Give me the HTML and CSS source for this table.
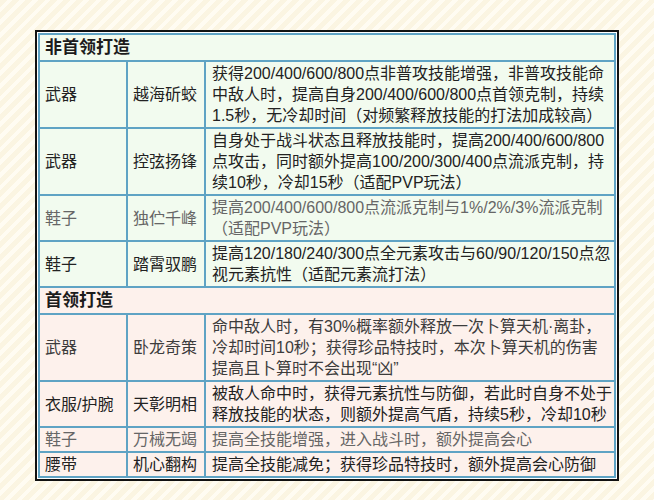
FILE: index.html
```html
<!DOCTYPE html>
<html lang="zh">
<head>
<meta charset="utf-8">
<link rel="stylesheet" href="styles.css">
</head>
<body>
<div class="frame">
<table class="gear">
  <colgroup><col class="c1"><col class="c2"><col class="c3"></colgroup>
  <tbody class="green">
    <tr><th colspan="3" class="head">非首领打造</th></tr>
    <tr><td>武器</td><td>越海斫蛟</td><td class="desc">获得200/400/600/800点非普攻技能增强，非普攻技能命中敌人时，提高自身200/400/600/800点首领克制，持续1.5秒，无冷却时间（对频繁释放技能的打法加成较高）</td></tr>
    <tr><td>武器</td><td>控弦扬锋</td><td class="desc">自身处于战斗状态且释放技能时，提高200/400/600/800点攻击，同时额外提高100/200/300/400点流派克制，持续10秒，冷却15秒（适配PVP玩法）</td></tr>
    <tr class="gray"><td>鞋子</td><td>独伫千峰</td><td class="desc">提高200/400/600/800点流派克制与1%/2%/3%流派克制（适配PVP玩法）</td></tr>
    <tr><td>鞋子</td><td>踏霄驭鹏</td><td class="desc">提高120/180/240/300点全元素攻击与60/90/120/150点忽视元素抗性（适配元素流打法）</td></tr>
  </tbody>
  <tbody class="pink">
    <tr><th colspan="3" class="head">首领打造</th></tr>
    <tr class="mid"><td>武器</td><td>卧龙奇策</td><td class="desc">命中敌人时，有30%概率额外释放一次卜算天机·离卦，冷却时间10秒；获得珍品特技时，本次卜算天机的伤害提高且卜算时不会出现“凶”</td></tr>
    <tr><td>衣服/护腕</td><td>天彰明相</td><td class="desc">被敌人命中时，获得元素抗性与防御，若此时自身不处于释放技能的状态，则额外提高气盾，持续5秒，冷却10秒</td></tr>
    <tr class="gray"><td>鞋子</td><td>万械无竭</td><td class="desc">提高全技能增强，进入战斗时，额外提高会心</td></tr>
    <tr><td>腰带</td><td>机心翻构</td><td class="desc">提高全技能减免；获得珍品特技时，额外提高会心防御</td></tr>
  </tbody>
</table>
</div>
</body>
</html>
```

FILE: styles.css
```css
html, body {
  margin: 0;
  padding: 0;
}
body {
  width: 654px;
  height: 500px;
  overflow: hidden;
  background-color: #fbf5e2;
  background-image: repeating-linear-gradient(135deg, #fbf5e2 0px, #fbf5e2 5px, #fffcf2 5px, #fffcf2 9px);
  font-family: "Liberation Sans", "Noto Sans CJK SC", sans-serif;
  color: #222;
}
.frame {
  margin: 30px 0 0 35px;
  width: 584px;
  box-sizing: border-box;
  border: 2px solid #111;
  padding: 1px;
  background: #fff;
}
.gear {
  width: 578px;
  border-collapse: collapse;
  table-layout: fixed;
  font-size: 16px;
  line-height: 21px;
}
.c1 { width: 88px; }
.c2 { width: 78px; }
.gear th, .gear td {
  border: 2px solid #5fa3c4;
  padding: 1px 5px;
  vertical-align: middle;
  text-align: left;
}
.gear td.desc {
  padding-left: 6px;
  padding-right: 1px;
}
.gear th.head {
  font-size: 17px;
  font-weight: bold;
  line-height: 23px;
  color: #1c1c1c;
}
.green th, .green td { background: #f2fbef; }
.pink th, .pink td { background: #fdf1ec; }
.gray td { color: #666; }
.mid td { color: #3c3c3c; }
```
